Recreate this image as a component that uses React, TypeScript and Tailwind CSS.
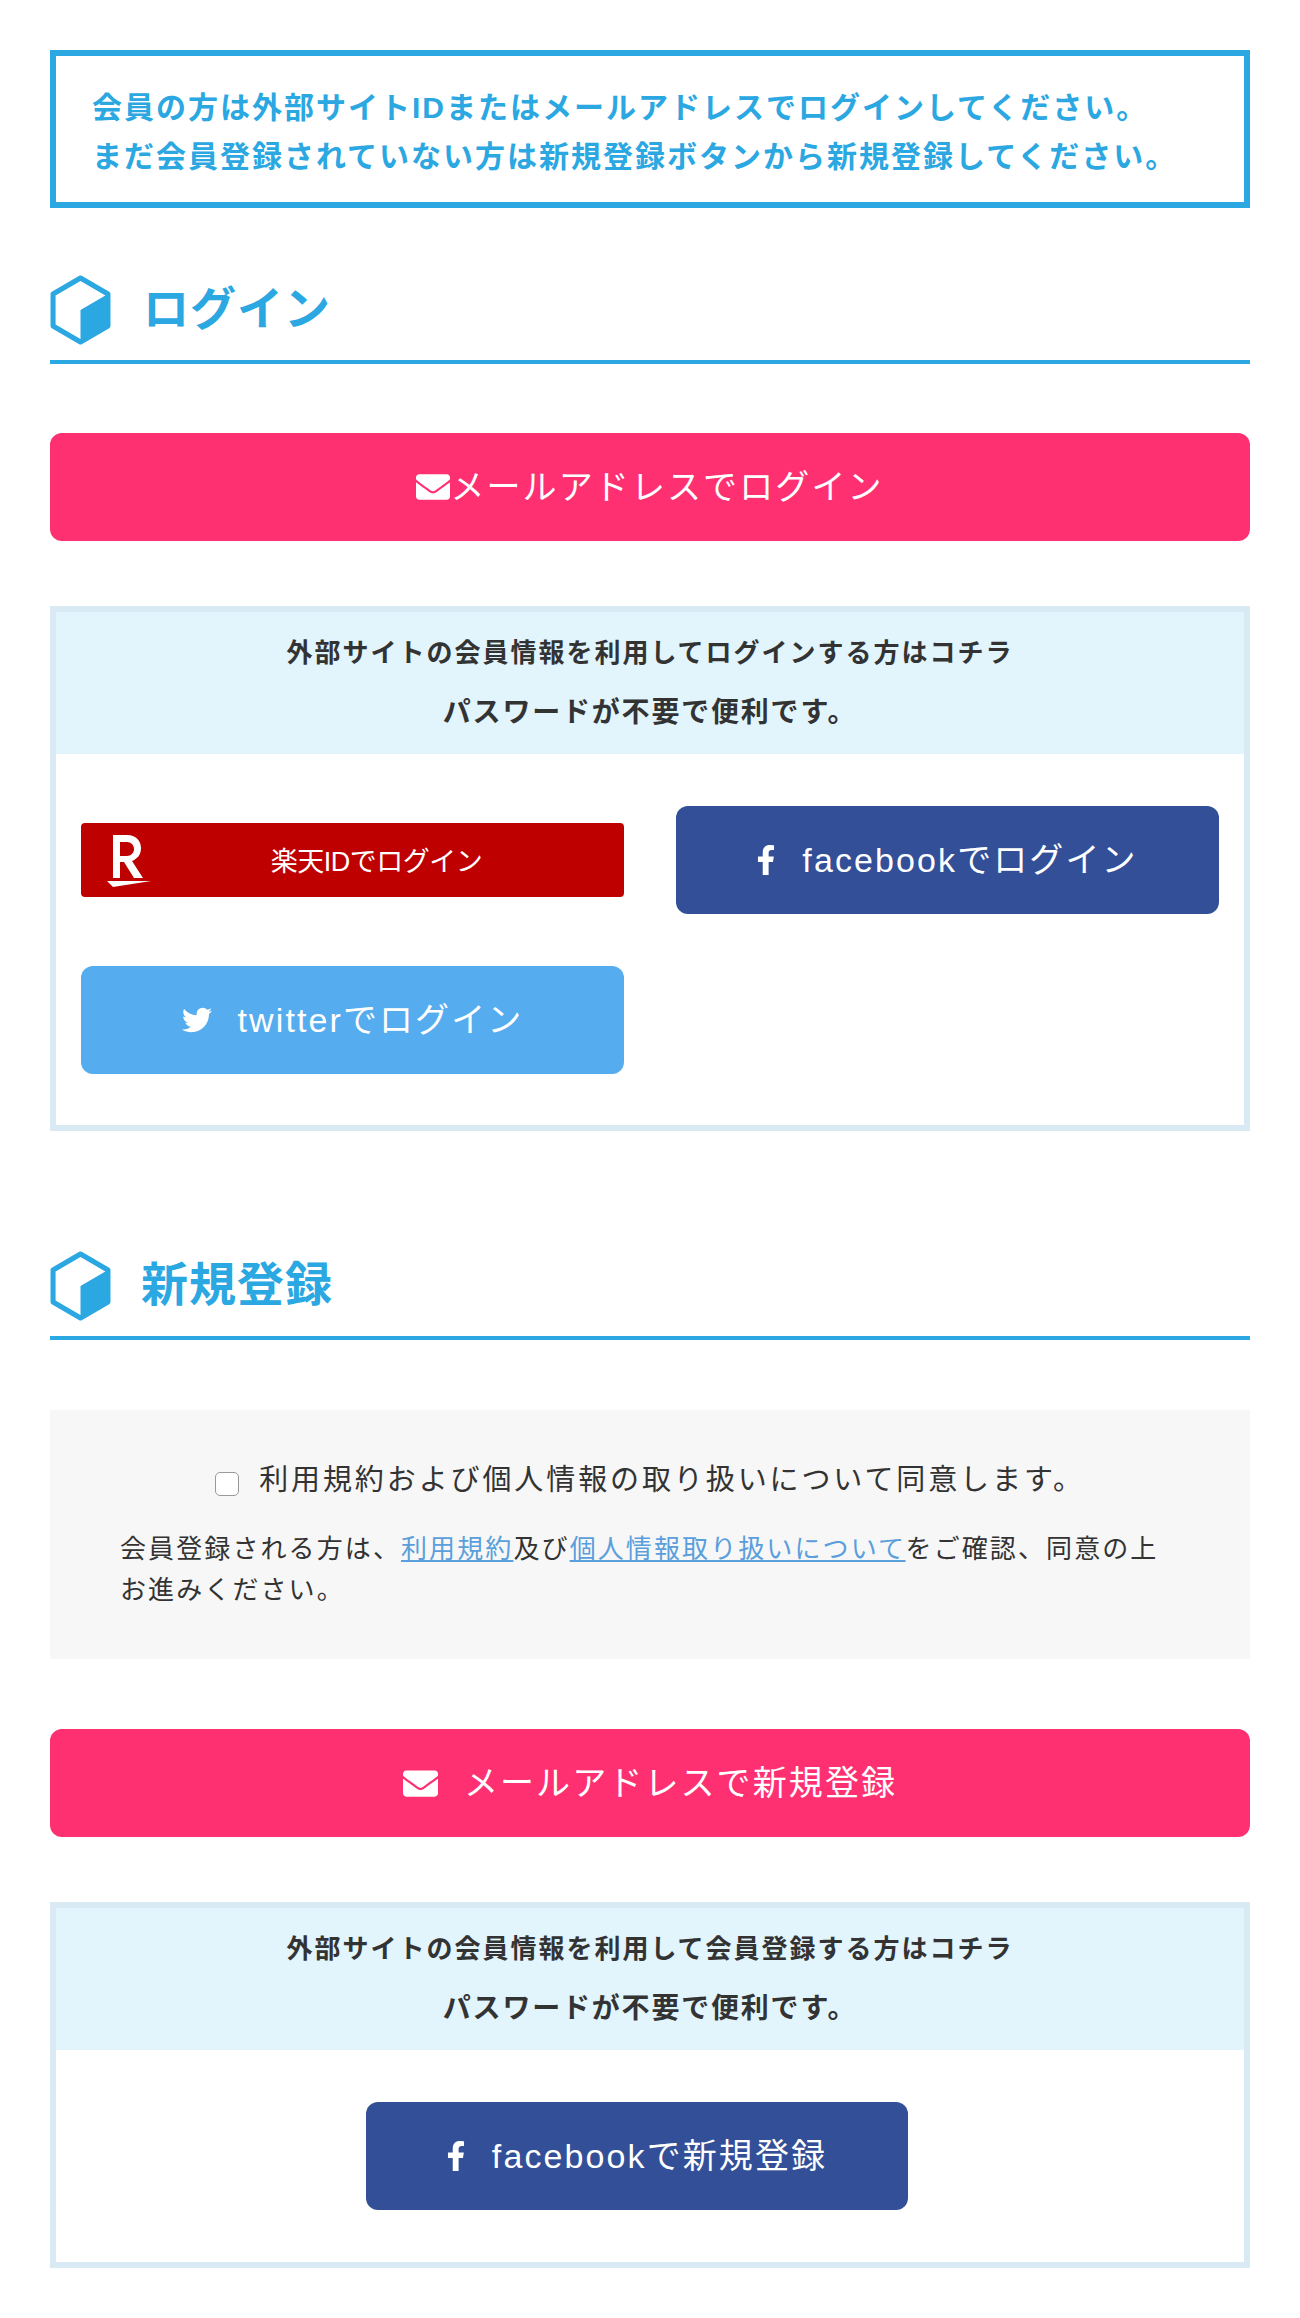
import { FaEnvelope, FaFacebookF, FaTwitter } from "react-icons/fa";

function Cube() {
  return (
    <svg width="61" height="70" viewBox="0 0 60 68" preserveAspectRatio="none" className="shrink-0">
      <path d="M30 3 L57 18.5 V49.5 L30 65 L3 49.5 V18.5 Z" fill="none" stroke="#2ba7e1" strokeWidth="5" strokeLinejoin="round" />
      <path d="M30 34 L57 18.5 V49.5 L30 65 Z" fill="#2ba7e1" />
    </svg>
  );
}

function Heading({ title, gap, size }: { title: string; gap: string; size: string }) {
  return (
    <div className={`flex items-center h-[88px] border-b-4 border-[#2ba7e1] pb-[16px] ${gap}`}>
      <Cube />
      <h2 className={`font-bold leading-none pb-[3px] text-[#2ba7e1] tracking-[1px] ${size}`}>{title}</h2>
    </div>
  );
}

function Btn({ color, icon, label, gap }: { color: string; icon: React.ReactNode; label: string; gap: string }) {
  return (
    <a className={`flex items-center justify-center h-[108px] rounded-[12px] text-white text-[34px] tracking-[2.1px] ${color} ${gap}`}>
      {icon}
      <span>{label}</span>
    </a>
  );
}

function ExtHeader({ first }: { first: string }) {
  return (
    <div className="bg-[#e2f4fc] py-[12px] text-center font-bold leading-[59px] text-[#333333]">
      <p className="text-[26px] tracking-[2px]">{first}</p>
      <p className="text-[28px] tracking-[1.8px]">パスワードが不要で便利です。</p>
    </div>
  );
}

export default function App() {
  return (
    <div className="min-h-[2318px] bg-white px-[50px] pt-[50px] font-['Liberation_Sans','Noto_Sans_CJK_JP',sans-serif]">
      <div className="border-[6px] border-[#2ba7e1] h-[158px] px-[36px] pt-[27px] text-[30px] font-bold leading-[49px] tracking-[2px] text-[#2ba7e1] whitespace-nowrap">
        <p>会員の方は外部サイトIDまたはメールアドレスでログインしてください。</p>
        <p>まだ会員登録されていない方は新規登録ボタンから新規登録してください。</p>
      </div>

      <div className="mt-[68px]">
        <Heading title="ログイン" gap="gap-[32px]" size="text-[46px]" />
      </div>

      <div className="mt-[69px]">
        <Btn color="bg-[#ff3071]" gap="gap-[0px]" icon={<FaEnvelope className="text-[34px]" />} label="メールアドレスでログイン" />
      </div>

      <section className="mt-[65px] border-[6px] border-[#d9eaf5]">
        <ExtHeader first="外部サイトの会員情報を利用してログインする方はコチラ" />
        <div className="grid grid-cols-2 gap-x-[52px] gap-y-[52px] items-center px-[25px] pt-[52px] pb-[51px]">
          <div className="relative flex items-center justify-center h-[74px] rounded-[4px] bg-[#bf0000] text-white text-[27px] tracking-[-0.5px]">
            <svg width="44" height="56" viewBox="0 0 44 56" className="absolute left-[26px] top-[10px]">
              <path d="M6 2 H20 C30 2 34 9 34 15 C34 22 30 26 25 28 L36 45 H27 L17 29 H13 V45 H6 Z M13 9 V23 H20 C24 23 27 20 27 16 C27 12 24 9 20 9 Z" fill="#fff" fillRule="evenodd" />
              <path d="M0 48 L44 48 L6 54 Z" fill="#fff" />
            </svg>
            <span className="ml-[48px] mt-[4px]">楽天IDでログイン</span>
          </div>
          <Btn color="bg-[#324f97]" gap="gap-[21px] pr-[6px]" icon={<FaFacebookF className="text-[30px]" />} label="facebookでログイン" />
          <Btn color="bg-[#55acee]" gap="gap-[26px]" icon={<FaTwitter className="text-[30px]" />} label="twitterでログイン" />
        </div>
      </section>

      <div className="mt-[121px]">
        <Heading title="新規登録" gap="gap-[30px]" size="text-[47px]" />
      </div>

      <div className="mt-[70px] h-[249px] bg-[#f7f7f7] px-[70px] pt-[47px] text-[#333333]">
        <label className="flex items-center justify-center gap-[20px] text-[29px] leading-[46px] tracking-[2.9px]">
          <input type="checkbox" className="mt-[8px] h-[24px] w-[24px] appearance-none rounded-[5px] border border-[#999999] bg-white" />
          <span>利用規約および個人情報の取り扱いについて同意します。</span>
        </label>
        <p className="mt-[26px] text-[26px] leading-[41px] tracking-[2.1px]">
          会員登録される方は、<a className="text-[#5a9fdc] underline">利用規約</a>及び<a className="text-[#5a9fdc] underline">個人情報取り扱いについて</a>をご確認、同意の上お進みください。
        </p>
      </div>

      <div className="mt-[70px]">
        <Btn color="bg-[#ff3071]" gap="gap-[26px]" icon={<FaEnvelope className="text-[35px]" />} label="メールアドレスで新規登録" />
      </div>

      <section className="mt-[65px] border-[6px] border-[#d9eaf5]">
        <ExtHeader first="外部サイトの会員情報を利用して会員登録する方はコチラ" />
        <div className="flex justify-center pt-[52px] pb-[52px] pr-[26px]">
          <div className="w-[542px]">
            <Btn color="bg-[#324f97]" gap="gap-[21px] pr-[6px]" icon={<FaFacebookF className="text-[30px]" />} label="facebookで新規登録" />
          </div>
        </div>
      </section>
    </div>
  );
}
